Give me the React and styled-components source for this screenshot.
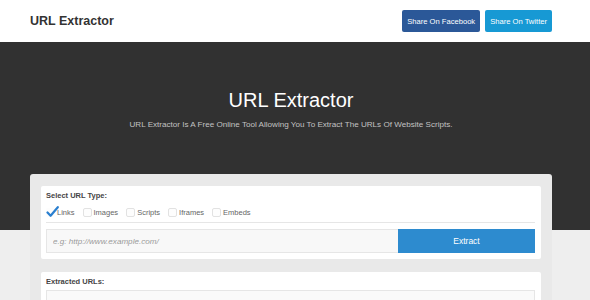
import React, { useState } from "react";
import styled, { createGlobalStyle } from "styled-components";

const GlobalStyle = createGlobalStyle`
  html, body {
    margin: 0;
    padding: 0;
    background: #eeeeee;
    font-family: "Liberation Sans", Arial, sans-serif;
  }
  * {
    box-sizing: border-box;
  }
`;

const types = ["Links", "Images", "Scripts", "Iframes", "Embeds"];

const App = () => {
  const [checked, setChecked] = useState(["Links"]);
  const [url, setUrl] = useState("");

  const toggle = (name) => {
    if (checked.includes(name)) {
      setChecked(checked.filter((c) => c !== name));
    } else {
      setChecked([...checked, name]);
    }
  };

  return (
    <>
      <GlobalStyle />
      <Header>
        <Brand>URL Extractor</Brand>
        <Share>
          <ShareButton $bg="#2b5898">Share On Facebook</ShareButton>
          <ShareButton $bg="#1799d4">Share On Twitter</ShareButton>
        </Share>
      </Header>
      <Hero>
        <HeroTitle>URL Extractor</HeroTitle>
        <HeroText>
          URL Extractor Is A Free Online Tool Allowing You To Extract The URLs
          Of Website Scripts.
        </HeroText>
      </Hero>
      <Main>
        <Card>
          <Panel>
            <Label>Select URL Type:</Label>
            <TypeRow>
              {types.map((t) => (
                <TypeItem key={t} onClick={() => toggle(t)}>
                  <Box $checked={checked.includes(t)}>
                    {checked.includes(t) && (
                      <svg width="13" height="12" viewBox="0 0 13 12">
                        <path
                          d="M1.5 6.5 L4.6 9.8 L11.8 1.2"
                          fill="none"
                          stroke="#2a7fcf"
                          strokeWidth="2.2"
                          strokeLinecap="round"
                          strokeLinejoin="round"
                        />
                      </svg>
                    )}
                  </Box>
                  <TypeName>{t}</TypeName>
                </TypeItem>
              ))}
            </TypeRow>
            <Divider />
            <InputRow>
              <UrlInput
                placeholder="e.g: http://www.example.com/"
                value={url}
                onChange={(e) => setUrl(e.target.value)}
              />
              <ExtractButton>Extract</ExtractButton>
            </InputRow>
          </Panel>
          <Panel $gap>
            <Label>Extracted URLs:</Label>
            <Output readOnly />
          </Panel>
        </Card>
      </Main>
    </>
  );
};

const Header = styled.header`
  height: 42px;
  background: #fff;
  display: flex;
  align-items: center;
  justify-content: space-between;
  padding: 0 38px 0 30px;
`;

const Brand = styled.div`
  font-size: 12.5px;
  font-weight: bold;
  color: #333;
`;

const Share = styled.div`
  display: flex;
  gap: 5px;
`;

const ShareButton = styled.button`
  height: 22px;
  padding: 0 5px;
  border: none;
  border-radius: 2px;
  background: ${(p) => p.$bg};
  color: #fff;
  font-family: "Liberation Sans", Arial, sans-serif;
  font-size: 7.6px;
  cursor: pointer;
`;

const Hero = styled.section`
  height: 188px;
  background: #313131;
  padding: 46px 8px 0 0;
  text-align: center;
`;

const HeroTitle = styled.h1`
  margin: 0;
  font-size: 20px;
  line-height: 24px;
  font-weight: normal;
  color: #fff;
`;

const HeroText = styled.p`
  margin: 8px 0 0;
  font-size: 8.1px;
  line-height: 10px;
  color: #c2c2c2;
`;

const Main = styled.main`
  padding: 0 38px 0 30px;
  margin-top: -56px;
`;

const Card = styled.div`
  background: #e9e9e9;
  border-radius: 3px 3px 0 0;
  padding: 12px 11px;
  min-height: 200px;
`;

const Panel = styled.div`
  background: #fff;
  border-radius: 2px;
  padding: 5px 6px 6px 5px;
  margin-top: ${(p) => (p.$gap ? "13px" : "0")};
`;

const Label = styled.div`
  font-size: 7.5px;
  line-height: 10px;
  font-weight: bold;
  color: #444;
`;

const TypeRow = styled.div`
  display: flex;
  align-items: center;
  gap: 8px;
  height: 12px;
  margin: 5px 0 4px;
`;

const TypeItem = styled.label`
  display: flex;
  align-items: center;
  gap: 2px;
  cursor: pointer;
`;

const Box = styled.span`
  position: relative;
  width: 9px;
  height: 9px;
  border: 1px solid ${(p) => (p.$checked ? "transparent" : "#e2e2e2")};
  border-radius: 2px;
  background: #fdfdfd;
  svg {
    position: absolute;
    left: -1px;
    top: -3px;
  }
`;

const TypeName = styled.span`
  font-size: 7.5px;
  color: #666;
`;

const Divider = styled.div`
  border-top: 1px solid #e6e6e6;
  margin-bottom: 6px;
`;

const InputRow = styled.div`
  display: flex;
  height: 24px;
`;

const UrlInput = styled.input`
  flex: 1;
  min-width: 0;
  height: 24px;
  border: 1px solid #e6e6e6;
  border-right: none;
  background: #f8f8f8;
  padding: 0 6px;
  font-family: "Liberation Sans", Arial, sans-serif;
  font-size: 8.1px;
  color: #555;
  outline: none;
  &::placeholder {
    font-style: italic;
    color: #9a9a9a;
  }
`;

const ExtractButton = styled.button`
  width: 137px;
  height: 24px;
  border: none;
  background: #2d8bcf;
  color: #fff;
  font-family: "Liberation Sans", Arial, sans-serif;
  font-size: 8.5px;
  cursor: pointer;
`;

const Output = styled.textarea`
  display: block;
  width: 100%;
  height: 120px;
  margin-top: 3px;
  border: 1px solid #e6e6e6;
  background: #fafafa;
  resize: none;
  outline: none;
`;

export default App;
